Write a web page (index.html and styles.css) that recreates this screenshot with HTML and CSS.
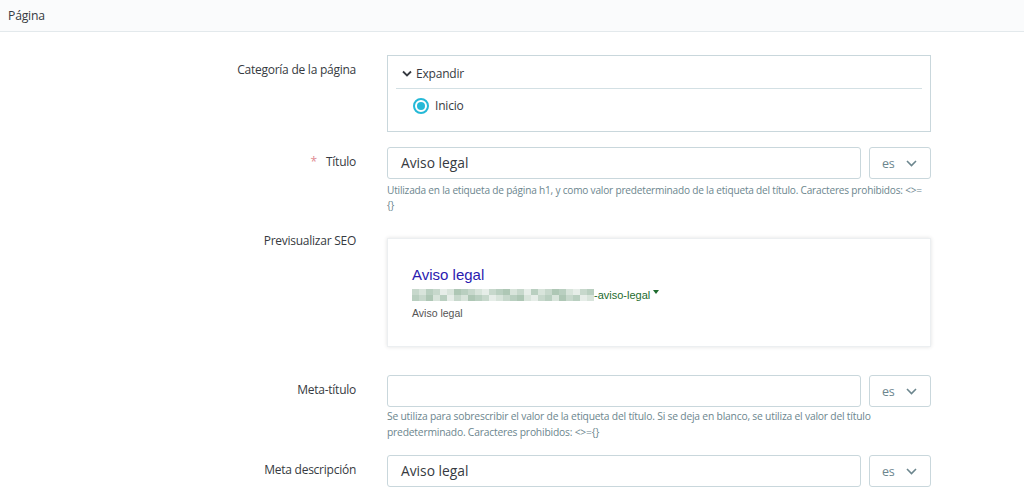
FILE: index.html
```html
<!DOCTYPE html>
<html lang="es">
<head>
<meta charset="utf-8">
<title>Página</title>
<link rel="stylesheet" href="styles.css">
</head>
<body>
<div class="card-header">Página</div>
<div class="form">
  <div class="row">
    <div class="label">Categoría de la página</div>
    <div class="field">
      <div class="tree">
        <div class="tree-head">
          <svg class="chev" width="10" height="7" viewBox="0 0 10 7"><path d="M1 1.5 L5 5.5 L9 1.5" fill="none" stroke="#363a41" stroke-width="1.8"/></svg>
          <span>Expandir</span>
        </div>
        <div class="tree-item">
          <span class="radio"><span class="dot"></span></span>
          <span>Inicio</span>
        </div>
      </div>
    </div>
  </div>

  <div class="row">
    <div class="label"><span class="req">*</span>Título</div>
    <div class="field">
      <div class="input-group">
        <div class="input">Aviso legal</div>
        <div class="lang">es <svg width="11" height="7" viewBox="0 0 11 7"><path d="M1 1 L5.5 5.5 L10 1" fill="none" stroke="#6c868e" stroke-width="1.6"/></svg></div>
      </div>
      <div class="help">Utilizada en la etiqueta de página h1, y como valor predeterminado de la etiqueta del título. Caracteres prohibidos: &lt;&gt;=<br>{}</div>
    </div>
  </div>

  <div class="row">
    <div class="label label-top">Previsualizar SEO</div>
    <div class="field">
      <div class="serp">
        <div class="serp-title">Aviso legal</div>
        <div class="serp-url">
          <div class="mosaic">
            <i class="a"></i><i class="b"></i><i class="c"></i><i class="a"></i><i class="d"></i><i class="b"></i><i class="e"></i><i class="c"></i><i class="a"></i><i class="b"></i><i class="d"></i><i class="a"></i><i class="c"></i><i class="e"></i><i class="b"></i><i class="a"></i><i class="d"></i><i class="c"></i><i class="b"></i><i class="a"></i><i class="e"></i><i class="c"></i><i class="b"></i><i class="d"></i><i class="a"></i><i class="c"></i>
            <i class="c"></i><i class="a"></i><i class="e"></i><i class="b"></i><i class="c"></i><i class="d"></i><i class="a"></i><i class="b"></i><i class="e"></i><i class="c"></i><i class="a"></i><i class="d"></i><i class="b"></i><i class="a"></i><i class="c"></i><i class="e"></i><i class="b"></i><i class="d"></i><i class="a"></i><i class="c"></i><i class="b"></i><i class="e"></i><i class="a"></i><i class="c"></i><i class="d"></i><i class="b"></i>
          </div>
          <span>-aviso-legal</span><span class="tri"></span>
        </div>
        <div class="serp-desc">Aviso legal</div>
      </div>
    </div>
  </div>

  <div class="row">
    <div class="label">Meta-título</div>
    <div class="field">
      <div class="input-group">
        <div class="input"></div>
        <div class="lang">es <svg width="11" height="7" viewBox="0 0 11 7"><path d="M1 1 L5.5 5.5 L10 1" fill="none" stroke="#6c868e" stroke-width="1.6"/></svg></div>
      </div>
      <div class="help help-wide">Se utiliza para sobrescribir el valor de la etiqueta del título. Si se deja en blanco, se utiliza el valor del título predeterminado. Caracteres prohibidos: &lt;&gt;={}</div>
    </div>
  </div>

  <div class="row">
    <div class="label">Meta descripción</div>
    <div class="field">
      <div class="input-group">
        <div class="input">Aviso legal</div>
        <div class="lang">es <svg width="11" height="7" viewBox="0 0 11 7"><path d="M1 1 L5.5 5.5 L10 1" fill="none" stroke="#6c868e" stroke-width="1.6"/></svg></div>
      </div>
    </div>
  </div>
</div>
</body>
</html>
```
FILE: styles.css
```css
* { box-sizing: border-box; }
html, body { margin: 0; background: #fff; }
body {
  font-family: "Open Sans", "Noto Sans", sans-serif;
  color: #363a41;
  font-size: 12px;
  letter-spacing: -0.2px;
  overflow: hidden;
}
.card-header {
  height: 32px;
  background: #fafbfc;
  border-bottom: 1px solid #e3e9ec;
  padding: 0 8px;
  line-height: 31px;
  font-size: 12.2px;
}
.form { padding-top: 23px; }
.row {
  display: grid;
  grid-template-columns: 356px 544px;
  column-gap: 31px;
  margin-bottom: 15px;
}
.label {
  text-align: right;
  padding-top: 5px;
  line-height: 20px;
  letter-spacing: -0.25px;
}
.label-top { padding-top: 3px; }
.req { color: #e08a91; margin-right: 9px; }
.tree {
  border: 1px solid #c9d7dc;
  height: 77px;
  padding: 0 8px;
}
.tree-head {
  height: 33px;
  border-bottom: 1px solid #d3e0e4;
  display: flex;
  align-items: center;
  padding-left: 6px;
  gap: 4px;
  padding-top: 2px;
}
.tree-item {
  display: flex;
  align-items: center;
  padding: 8px 0 0 17px;
  gap: 6px;
}
.radio {
  width: 16px; height: 16px;
  border-radius: 50%;
  border: 2px solid #25b9d7;
  display: flex; align-items: center; justify-content: center;
}
.dot { width: 8px; height: 8px; border-radius: 50%; background: #25b9d7; }
.input-group { display: flex; gap: 8px; }
.input {
  flex: 1;
  height: 32px;
  border: 1px solid #c9d7dc;
  border-radius: 3px;
  padding: 0 13px;
  line-height: 30px;
  font-size: 13.8px;
  letter-spacing: 0;
}
.lang {
  width: 62px;
  height: 32px;
  border: 1px solid #c9d7dc;
  border-radius: 3px;
  display: flex; align-items: center;
  padding-left: 12px; gap: 11px;
  color: #6c868e;
  font-size: 12.5px;
}
.help {
  color: #6c868e;
  font-size: 10.1px;
  line-height: 15px;
  margin-top: 4px;
}
.help-wide { font-size: 10.3px; line-height: 16px; margin-top: 1px; }
.serp {
  margin: 10px 0 13px;
  height: 109px;
  border: 1px solid #eceff1;
  box-shadow: 0 0 4px rgba(0,0,0,0.12);
  padding: 26px 24px;
  font-family: "Liberation Sans", Arial, sans-serif;
  letter-spacing: 0;
}
.serp-title { color: #2a1bb0; font-size: 15px; line-height: 20px; }
.serp-url {
  display: flex; align-items: center;
  color: #1e6b2e; font-size: 11px; line-height: 16px;
  margin-top: 2px;
}
.mosaic {
  display: grid;
  grid-template-columns: repeat(26, 7px);
  grid-auto-rows: 6px;
  width: 182px;
}
.mosaic i { display: block; }
.mosaic .a { background: #c7d8cc; }
.mosaic .b { background: #d8e4db; }
.mosaic .c { background: #b9cfc0; }
.mosaic .d { background: #e6ede8; }
.mosaic .e { background: #aec7b5; }
.tri {
  width: 0; height: 0;
  border-left: 3px solid transparent;
  border-right: 3px solid transparent;
  border-top: 4px solid #1e6b2e;
  margin-left: 3px;
  align-self: flex-start;
  margin-top: 3px;
}
.serp-desc { color: #545454; font-size: 10.5px; line-height: 15px; margin-top: 3px; }
```
